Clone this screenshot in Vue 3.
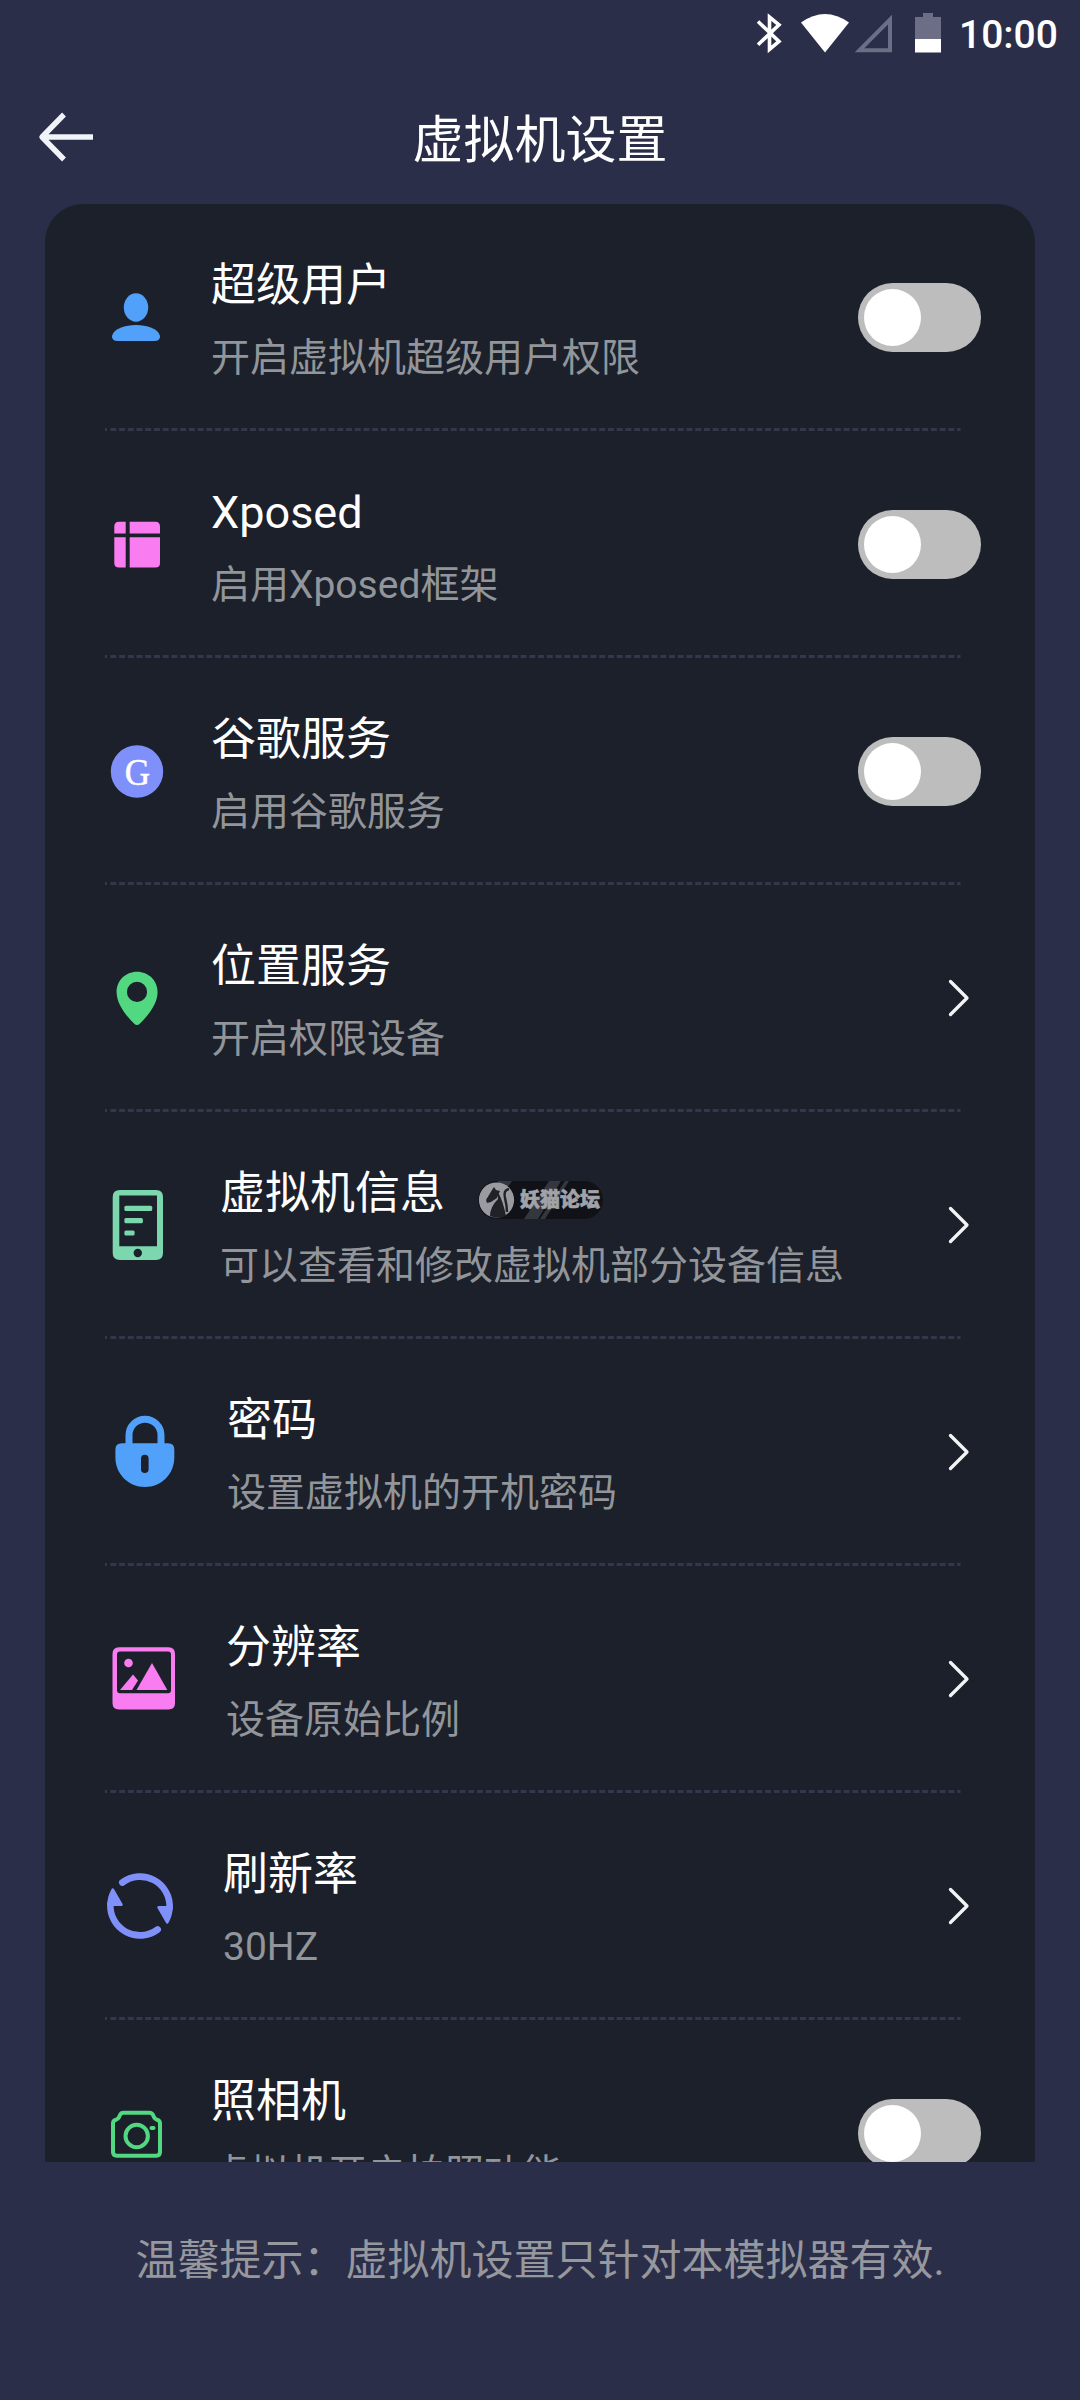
<script setup>
const rows = [
  { icon: 'user', title: '超级用户', sub: '开启虚拟机超级用户权限', kind: 'toggle', col: 116 },
  { icon: 'grid', title: 'Xposed', sub: '启用Xposed框架', kind: 'toggle', col: 116 },
  { icon: 'google', title: '谷歌服务', sub: '启用谷歌服务', kind: 'toggle', col: 116 },
  { icon: 'pin', title: '位置服务', sub: '开启权限设备', kind: 'link', col: 116 },
  { icon: 'phone', title: '虚拟机信息', sub: '可以查看和修改虚拟机部分设备信息', kind: 'link', col: 125, badge: '妖猫论坛' },
  { icon: 'lock', title: '密码', sub: '设置虚拟机的开机密码', kind: 'link', col: 132 },
  { icon: 'image', title: '分辨率', sub: '设备原始比例', kind: 'link', col: 131 },
  { icon: 'refresh', title: '刷新率', sub: '30HZ', kind: 'link', col: 128 },
  { icon: 'camera', title: '照相机', sub: '虚拟机开启拍照功能', kind: 'toggle', col: 116 },
]
</script>

<template>
  <div class="screen">
    <div class="status">
      <svg class="status-icons" width="190" height="44" viewBox="755 10 190 44">
        <path d="M758 21.500 779 41.500 769.500 49.500V17L779 24.800 758 44.800" fill="none" stroke="#fff" stroke-width="3.600" />
        <path d="M801 22.500Q825 5.500 849 22.500L825 52.500Z" fill="#fff" />
        <path d="M890 19.500V50.300H859.500Z" fill="none" stroke="#6b6e84" stroke-width="4" />
        <path d="M923 13h10v4h8v22h-26V17h8z" fill="#6b6e84" />
        <path d="M915 39h26v13.500h-26z" fill="#fff" />
      </svg>
      <span class="clock">10:00</span>
    </div>

    <header class="header">
      <svg class="back" width="58" height="54" viewBox="37 110 58 54">
        <path d="M64 114.500 42 137 64 159.500M42 137H93" fill="none" stroke="#f0f4f8" stroke-width="5.400" stroke-linejoin="round" />
      </svg>
      <h1 class="heading">虚拟机设置</h1>
    </header>

    <main class="card">
      <section v-for="row in rows" :key="row.icon" class="row">
        <div class="icon-col" :style="{ width: row.col + 'px' }">
          <svg width="85" height="85" viewBox="0 0 85 85">
            <g v-if="row.icon === 'user'" fill="#51a1fb">
              <ellipse cx="41" cy="32.500" rx="12.200" ry="14.200" />
              <path d="M17 61C19 53.500 30 50 41 50S63 53.500 65 61Q65.500 66 59 66H23Q16.500 66 17 61Z" />
            </g>
            <g v-else-if="row.icon === 'grid'" fill="#f97df1">
              <path d="M19.300 31.500V24.500Q19.300 19.700 24 19.700H30.700V31.500Z" />
              <path d="M34.700 31.500V19.700H60.500Q65 19.700 65 24.500V31.500Z" />
              <path d="M19.300 35.200H30.700V65.500H24Q19.300 65.500 19.300 61Z" />
              <path d="M34.700 35.200H65V61Q65 65.500 60.500 65.500H34.700Z" />
            </g>
            <g v-else-if="row.icon === 'google'">
              <circle cx="42" cy="42.500" r="26.200" fill="#8090fb" />
              <text transform="translate(42.300 56) scale(0.9 1)" class="g-letter">G</text>
            </g>
            <path
              v-else-if="row.icon === 'pin'"
              fill="#52d880" fill-rule="evenodd"
              d="M42 15.700C53.500 15.700 62.600 24.500 62.600 36C62.600 48 53 59.500 45 67.500Q42 70.500 39 67.500C31 59.500 21.600 48 21.600 36C21.600 24.500 30.500 15.700 42 15.700ZM42 25.800A10.100 10.100 0 1 0 42 46A10.100 10.100 0 1 0 42 25.800Z"
            />
            <g v-else-if="row.icon === 'phone'" fill="#7cd6ae">
              <path
                fill-rule="evenodd"
                d="M25 7H61Q68 7 68 14V70Q68 77 61 77H25Q17.700 77 17.700 70V14Q17.700 7 25 7ZM24.300 12.500V63.200H62V12.500ZM42.800 65.800A4.200 4.200 0 1 0 42.800 74.200A4.200 4.200 0 1 0 42.800 65.800Z"
              />
              <rect x="29.400" y="22.800" width="27.800" height="5.200" rx="1.500" />
              <rect x="29.400" y="35" width="18.500" height="5.200" rx="1.500" />
              <rect x="29.400" y="47.500" width="10.200" height="5" rx="1.500" />
            </g>
            <g v-else-if="row.icon === 'lock'">
              <path d="M34 36V25.200A16 16 0 0 1 66 25.200V36" fill="none" stroke="#51a1fb" stroke-width="7" />
              <path
                fill="#51a1fb" fill-rule="evenodd"
                d="M27 33.300H73Q79.300 33.300 79.300 39.500V47.500C79.300 64 66.500 77 50 77S20.400 64 20.400 47.500V39.500Q20.400 33.300 27 33.300ZM49.800 44.700Q46 44.700 46 48.500V59.200Q46 63 49.800 63T53.600 59.200V48.500Q53.600 44.700 49.800 44.700Z"
              />
            </g>
            <g v-else-if="row.icon === 'image'" fill="#f97df1">
              <path
                fill-rule="evenodd"
                d="M24 10.300H73.500Q80 10.300 80 17V66Q80 72.500 73.500 72.500H24Q17.500 72.500 17.500 66V17Q17.500 10.300 24 10.300ZM25 14.600Q22 14.600 22 17.600V53.300Q22 56.300 25 56.300H73Q76 56.300 76 53.300V17.600Q76 14.600 73 14.600Z"
              />
              <circle cx="33.500" cy="26" r="4.300" />
              <path d="M57 26 72.300 53H41.500Z" />
              <path d="M25 53 38 37.500 43 43.500 37 53Z" />
            </g>
            <g v-else-if="row.icon === 'refresh'">
              <g v-for="turn in [0, 180]" :key="turn" :transform="`rotate(${turn} 45 42)`">
                <path d="M27.300 18.500A29.600 29.600 0 0 1 74.600 44" fill="none" stroke="#8090fb" stroke-width="6.600" stroke-linecap="round" />
                <path d="M63.500 43.300H76.500Q76.500 51 72.300 58.500Z" fill="#8090fb" stroke="#8090fb" stroke-width="2.500" stroke-linejoin="round" />
              </g>
            </g>
            <g v-else fill="none" stroke="#52d880" stroke-width="4">
              <path d="M28.500 21.700H54.500Q57 21.700 58 24L59 26.200Q60 28.300 62 28.800Q65 29.500 65 32.500V61Q65 64.700 61.300 64.700H21.700Q18 64.700 18 61V32.500Q18 29.500 21 28.800Q23 28.300 24 26.200L25 24Q26 21.700 28.500 21.700Z" />
              <circle cx="41.700" cy="45" r="11.200" />
              <path d="M56.500 37H58.500" stroke-linecap="round" />
            </g>
          </svg>
        </div>

        <div class="texts">
          <div class="title-line">
            <span class="title">{{ row.title }}</span>
            <span v-if="row.badge" class="badge">
              <svg class="badge-art" width="125" height="38" viewBox="0 0 125 38">
                <path d="M71 0H83L60 38H46ZM87 0H91L67 38H62ZM20 0H34L20 20Z" fill="#34373e" />
                <circle cx="18.500" cy="19" r="17.600" fill="#999ba1" />
                <path d="M8 19 14 9 16 6 18 9 22 10 19 17 13 21 9 22ZM20 11Q25 20 28 35Q20 38 12 35Q12 26 20 18Z" fill="#202228" />
                <path d="M31 8Q25 9 27 17T29 31" fill="none" stroke="#202228" stroke-width="2.500" />
              </svg>
              <span class="badge-text">{{ row.badge }}</span>
            </span>
          </div>
          <div class="sub">{{ row.sub }}</div>
        </div>

        <div v-if="row.kind === 'toggle'" class="toggle"><span class="knob"></span></div>
        <svg v-else class="chevron" width="24" height="40" viewBox="0 0 24 40">
          <path d="M3.500 3.500 20 20 3.500 36.500" fill="none" stroke="#f2f4f6" stroke-width="3.300" stroke-linecap="round" stroke-linejoin="round" />
        </svg>

        <svg class="divider" width="856" height="3" viewBox="0 0 856 3">
          <path d="M0 1.500H2" stroke="#34374b" stroke-width="3" />
          <path d="M5.300 1.500H855.500" stroke="#34374b" stroke-width="3" stroke-dasharray="6 2.730" />
        </svg>
      </section>
    </main>

    <footer class="hint">温馨提示：虚拟机设置只针对本模拟器有效.</footer>
  </div>
</template>

<style>
body {
  background: #2b2e49;
}
</style>

<style scoped>
.screen {
  width: 1080px;
  height: 2400px;
  overflow: hidden;
  display: flex;
  flex-direction: column;
  background: #2b2e49;
  font-family: Roboto, "Noto Sans CJK SC", sans-serif;
  color: #fff;
}
.status {
  height: 72px;
  flex: none;
  display: flex;
  justify-content: flex-end;
  align-items: flex-start;
  padding-right: 24px;
}
.status-icons {
  margin-top: 10px;
  margin-right: 14px;
}
.clock {
  width: 97px;
  font-size: 39px;
  font-weight: 500;
  line-height: 46px;
  margin-top: 12px;
  white-space: nowrap;
}
.header {
  height: 132px;
  flex: none;
  display: grid;
  grid-template-columns: 95px 1fr 95px;
  align-items: start;
}
.back {
  margin: 38px 0 0 37px;
}
.heading {
  margin: 39px 0 0;
  text-align: center;
  font-size: 51px;
  font-weight: 400;
  line-height: 60px;
}
.card {
  width: 990px;
  height: 1958px;
  flex: none;
  margin: 0 auto;
  overflow: hidden;
  border-radius: 38px 38px 0 0;
  background: #1c202b;
}
.row {
  position: relative;
  height: 227px;
  display: flex;
  align-items: center;
  padding-left: 50px;
  padding-right: 54px;
  box-sizing: border-box;
}
.icon-col {
  flex: none;
  display: flex;
}
.texts {
  flex: 1;
  height: 227px;
  padding-top: 52px;
  box-sizing: border-box;
}
.title-line {
  display: flex;
  align-items: center;
  height: 60px;
}
.title {
  font-size: 45px;
  line-height: 60px;
  white-space: nowrap;
}
.sub {
  margin-top: 16px;
  font-size: 39px;
  line-height: 52px;
  color: #929599;
  white-space: nowrap;
}
.toggle {
  width: 123px;
  height: 69px;
  flex: none;
  display: flex;
  align-items: center;
  padding-left: 6px;
  box-sizing: border-box;
  border-radius: 35px;
  background: #bdbdbd;
}
.knob {
  width: 57px;
  height: 57px;
  border-radius: 50%;
  background: #fff;
}
.chevron {
  flex: none;
  margin-right: 10px;
  margin-bottom: 2px;
}
.divider {
  position: absolute;
  left: 60px;
  bottom: 0;
}
.badge {
  position: relative;
  width: 125px;
  height: 38px;
  margin-left: 33px;
  margin-top: 11px;
  display: flex;
  align-items: center;
  justify-content: flex-end;
  border-radius: 19px;
  overflow: hidden;
  background: #101218;
}
.badge-art {
  position: absolute;
  left: 0;
  top: 0;
}
.badge-text {
  position: relative;
  margin-right: 3px;
  font-size: 20px;
  font-weight: 900;
  line-height: 36px;
  color: #a0a3a9;
  -webkit-text-stroke: 0.6px #a0a3a9;
}
.g-letter {
  font-family: "Liberation Serif", serif;
  font-size: 39px;
  text-anchor: middle;
  fill: #fff;
  stroke: #fff;
  stroke-width: 0.5px;
}
.hint {
  margin-top: 71px;
  text-align: center;
  font-size: 42px;
  line-height: 56px;
  color: #96989e;
  white-space: nowrap;
}
</style>
